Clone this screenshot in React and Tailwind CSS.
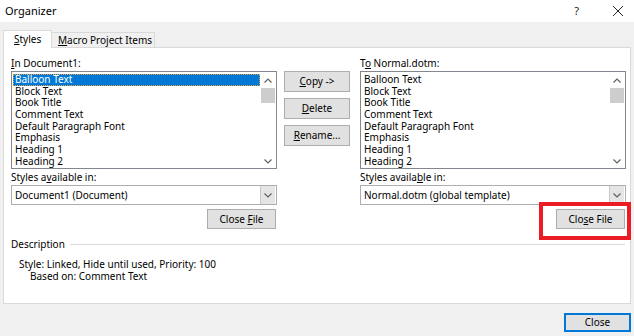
import React from 'react';

const ITEMS = ['Balloon Text', 'Block Text', 'Book Title', 'Comment Text', 'Default Paragraph Font', 'Emphasis', 'Heading 1', 'Heading 2'];

function Chevron({ up }) {
  return (
    <svg width="8" height="5" viewBox="0 0 8 5" className="block">
      <polyline
        points={up ? '0.5,4.5 4,1 7.5,4.5' : '0.5,0.5 4,4 7.5,0.5'}
        fill="none" stroke="#606060" strokeWidth="1.2" />
    </svg>
  );
}

function StyleList({ selected }) {
  return (
    <div className="h-[98px] border border-[#828790] bg-white flex">
      <div className="flex-1 pt-[2px] pl-[1px] overflow-hidden">
        {ITEMS.map((item, i) => (
          <div
            key={item}
            className={`h-[11.7px] leading-[11.7px] pl-[2px] whitespace-nowrap ${selected && i === 0 ? 'bg-[#0078d7] text-white outline outline-1 outline-dotted outline-[#e8a040] -outline-offset-1' : 'text-black'}`}>
            {item}
          </div>
        ))}
      </div>
      <div className="w-[16px] flex flex-col items-center">
        <div className="h-[16px] flex items-center justify-center"><Chevron up /></div>
        <div className="w-[14px] h-[15px] bg-[#cdcdcd]" />
        <div className="flex-1" />
        <div className="h-[14px] flex items-center justify-center"><Chevron /></div>
      </div>
    </div>
  );
}

function Combo({ value }) {
  return (
    <div className="h-[20px] border border-[#adadad] bg-white flex items-center">
      <span className="flex-1 pl-[3px] whitespace-nowrap">{value}</span>
      <div className="w-[15px] h-[18px] mr-[1px] bg-[#e5e5e5] border-l border-[#c8c8c8] flex items-center justify-center">
        <Chevron />
      </div>
    </div>
  );
}

function Btn({ children, className = '' }) {
  return (
    <div className={`border border-[#adadad] bg-[#e1e1e1] flex items-center justify-center whitespace-nowrap ${className}`}>
      <span>{children}</span>
    </div>
  );
}

export default function App() {
  return (
    <div
      className="w-[634px] h-[336px] bg-[#f0f0f0] flex flex-col relative overflow-hidden text-[10px] text-black"
      style={{ fontFamily: '"Noto Sans", "Open Sans", sans-serif' }}>
      {/* Title bar */}
      <div className="h-[22px] bg-white flex items-center pl-[5px] shrink-0">
        <span className="flex-1 text-[11px]">Organizer</span>
        <span className="text-[11px] mr-[33px] text-[#222]">?</span>
        <svg width="12" height="12" viewBox="0 0 12 12" className="mr-[10px]">
          <path d="M1 1 L11 11 M11 1 L1 11" stroke="#222" strokeWidth="1" />
        </svg>
      </div>

      {/* Tabs */}
      <div className="h-[25px] pl-[3px] flex items-end shrink-0">
        <div className="w-[49px] h-[18px] -mb-px relative z-10 bg-white border border-b-0 border-[#d9d9d9] flex items-center pl-[10px]">
          <span><u>S</u>tyles</span>
        </div>
        <div className="w-[103px] h-[15px] border border-l-0 border-b-0 border-[#d9d9d9] flex items-center pl-[6px] whitespace-nowrap">
          <span><u>M</u>acro Project Items</span>
        </div>
      </div>

      {/* Panel */}
      <div className="ml-[3px] w-[628px] h-[257px] shrink-0 bg-white border border-[#d9d9d9] pl-[7px] pt-[7px] flex flex-col">
        <div className="flex">
          {/* Left column */}
          <div className="w-[266px] flex flex-col">
            <div className="h-[16px] leading-[16px]"><u>I</u>n Document1:</div>
            <StyleList selected />
            <div className="h-[16px] flex items-center"><span>Styles a<u>v</u>ailable in:</span></div>
            <Combo value="Document1 (Document)" />
            <Btn className="self-end mr-[1px] mt-[4px] w-[69px] h-[20px]">Close <u>F</u>ile</Btn>
          </div>

          {/* Middle buttons */}
          <div className="ml-[7px] pt-[16px] flex flex-col gap-[6px]">
            <Btn className="w-[66px] h-[21px]"><u>C</u>opy -&gt;</Btn>
            <Btn className="w-[66px] h-[21px]"><u>D</u>elete</Btn>
            <Btn className="w-[66px] h-[21px]"><u>R</u>ename...</Btn>
          </div>

          {/* Right column */}
          <div className="ml-[10px] w-[266px] flex flex-col">
            <div className="h-[16px] leading-[16px]">T<u>o</u> Normal.dotm:</div>
            <StyleList />
            <div className="h-[16px] flex items-center"><span>Styles availa<u>b</u>le in:</span></div>
            <Combo value="Normal.dotm (global template)" />
            <Btn className="self-end mr-[1px] mt-[4px] w-[69px] h-[20px]">Clo<u>s</u>e File</Btn>
          </div>
        </div>

        {/* Description */}
        <div className="mt-[8px] h-[15px] flex items-center pr-[5px]">
          <span>Description</span>
          <div className="flex-1 ml-[5px] h-px bg-[#d9d9d9]" />
        </div>
        <div className="pl-[8px] mt-[6px] leading-[12px]">Style: Linked, Hide until used, Priority: 100</div>
        <div className="pl-[19px] leading-[12px]">Based on: Comment Text</div>
      </div>

      {/* Footer */}
      <div className="flex justify-end pr-[3px] mt-[9px]">
        <div className="w-[67px] h-[19px] border-2 border-[#0078d7] bg-[#e1e1e1] flex items-center justify-center">Close</div>
      </div>

      {/* Highlight annotation */}
      <div className="absolute left-[539px] top-[202px] w-[92px] h-[38px] border-4 border-[#ec1c24] pointer-events-none" />
    </div>
  );
}
